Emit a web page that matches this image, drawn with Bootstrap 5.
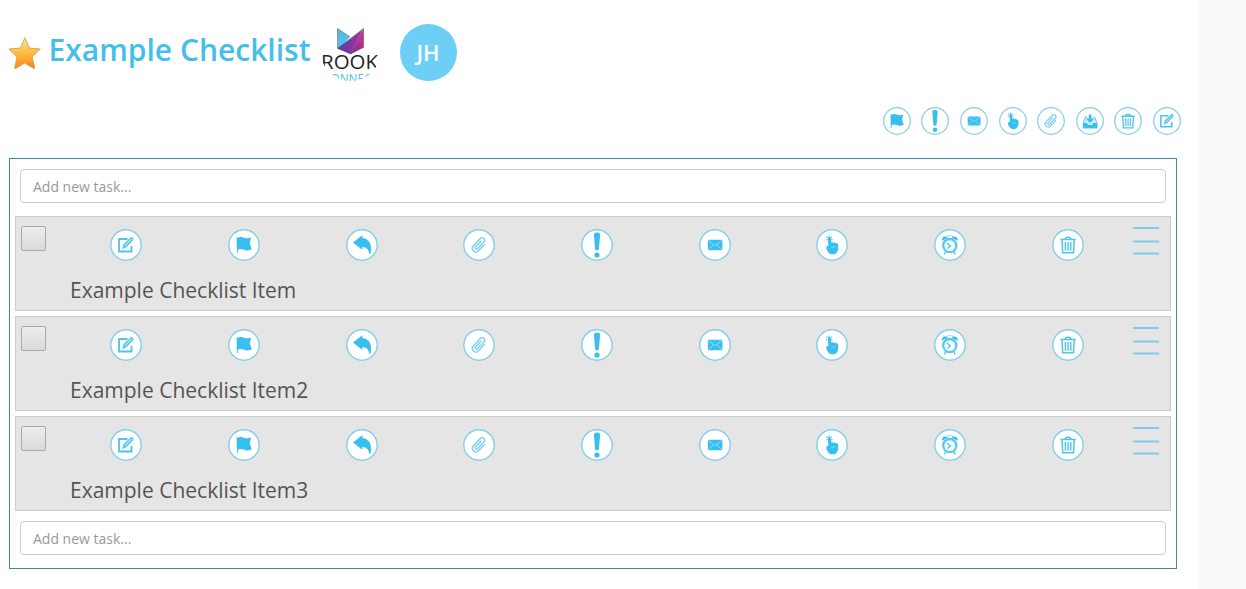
<!DOCTYPE html>
<html lang="en">
<head>
<meta charset="utf-8">
<meta name="viewport" content="width=device-width, initial-scale=1">
<title>Example Checklist</title>
<link href="https://cdn.jsdelivr.net/npm/bootstrap@5.3.0/dist/css/bootstrap.min.css" rel="stylesheet">
<style>
  body { font-family: "Open Sans", "Noto Sans", sans-serif; background: #fafafa; height: 589px; overflow: hidden; color: #555; }
  .page { width: 1199px; height: 589px; background: #fff; padding: 24px 22px 0 9px; }
  .page-head { height: 57px; }
  .star { width: 32px; height: 34px; margin-top: 0; }
  .page-title { font-size: 30px; font-weight: 600; color: #45bfea; line-height: 40px; margin: -5px 0 0 7.5px; white-space: nowrap; width: 272.5px; }
  .brand-logo { width: 59px; height: 57px; border-radius: 50%; overflow: hidden; }
  .avatar { width: 57px; height: 57px; background: #6dcff6; color: #fff; font-size: 22px; font-weight: 600; margin-left: 20px; padding-right: 1px; }
  .tools { margin: 26px -4px 0 0; gap: 10.6px; height: 28px; }
  .tools svg { width: 28px; height: 28px; display: block; }
  .panel { width: 1168px; height: 411px; border: 1px solid #3a8ba8; margin-top: 23px; padding: 10px 5px 0; }
  .task-input { height: 34px; font-size: 14px; padding: 6px 12px 6px; border: 1px solid #ccc; border-radius: 4px; margin: 0 5px; width: 1146px; line-height: 21px; }
  .task-input::placeholder { color: #999; opacity: 1; }
  .items { margin: 13px 0 10px; gap: 5px; }
  .item { height: 95px; background: #e5e5e5; border: 1px solid #ccc; padding: 9px 11px 0 5px; }
  .tick { appearance: none; width: 25px; height: 25px; margin: 0; border: 1px solid #aaa; border-radius: 2px; background: linear-gradient(#ededed, #dadada); flex: none; }
  .actions { width: 1059.3px; margin: 3px 0 0 21.4px; flex: none; }
  .actions svg { width: 32px; height: 32px; display: block; margin: auto; }
  .grip { width: 26px; height: 28px; margin-left: 6.3px; margin-top: 1px; flex: none; }
  .item-name { font-size: 21px; line-height: 28px; margin: 15px 0 0 49px; white-space: nowrap; }
  .item > .d-flex { height: 35px; }
</style>
</head>
<body>
<svg width="0" height="0" class="position-absolute" aria-hidden="true">
  <defs>
    <symbol id="ring" viewBox="0 0 32 32"><circle cx="16" cy="16" r="15.2" fill="#fff" stroke="#84cfe8" stroke-width="1.4"/></symbol>
    <symbol id="edit" viewBox="0 0 32 32"><use href="#ring"/>
      <path d="M17.500 10H9v12.500h12.500V17" fill="none" stroke="#4cc4ec" stroke-width="1.800"/>
      <path d="M13.200 19l.8-3.200 6.800-6.900c1-.9 2.800.8 1.900 1.900l-6.800 6.900z" fill="#a5e2f6" stroke="#4cc4ec" stroke-width="1.300"/></symbol>
    <symbol id="flag" viewBox="0 0 32 32"><use href="#ring"/>
      <path d="M8.600 8.500l1-.4v1c2.200-1.800 4.400-1 6.800-.2 2.200.8 4.200.5 6.700-.3l-1.400 5.700 2 5.800c-2.200 1.700-4.600 1.700-6.900.8-2.300-.9-4.600-1.200-7-.2v3.300H8.900z" fill="#37bff0"/></symbol>
    <symbol id="bang" viewBox="0 0 32 32"><use href="#ring"/>
      <path d="M12.900 5.800c0-3 6.200-3 6.200 0l-1.200 14.300c-.2 1.700-3.600 1.700-3.800 0z" fill="#37bff0"/><circle cx="16" cy="26" r="2.600" fill="#37bff0"/></symbol>
    <symbol id="mail" viewBox="0 0 32 32"><use href="#ring"/>
      <rect x="8.800" y="10.800" width="14.600" height="10.400" rx="1.200" fill="#37bff0"/>
      <path d="M9.500 11.700l6.600 5 6.600-5M9.500 20.500l4.800-4.700M22.700 20.500l-4.800-4.700" fill="none" stroke="#a9e3f7" stroke-width=".8"/></symbol>
    <symbol id="hand" viewBox="0 0 32 32"><use href="#ring"/>
      <path d="M11.900 9.200c.1-1.600 2.700-1.600 2.900 0l.6 4.600c.8-.8 2-.7 2.400.1.800-.6 1.900-.3 2.200.5 1.100-.4 2.200.4 2.200 1.500.5 5.300-1 9.100-5 9.400-4 .2-5.500-2.400-6.700-5.400-.7-1.800.2-3.300 1.900-2.800z" fill="#37bff0"/>
      <path d="M10 10.800l1.600-.4M10.300 7.800l1.400.8M13.200 6.400v1.600M16.200 7.800l-1.400.8M16.500 10.800l-1.500-.4M15.200 18.500l4-.7" stroke="#6fd1f2" stroke-width="1.300" fill="none"/></symbol>
    <symbol id="clip" viewBox="0 0 32 32"><use href="#ring"/>
      <path transform="rotate(43 16 16)" d="M19.500 12v8.700c0 4.500-7 4.500-7 0V10.300c0-3.300 5-3.300 5 0v9.300c0 2-2.700 2-2.700 0V12" fill="none" stroke="#6fcff0" stroke-width="1.300" stroke-linecap="round"/></symbol>
    <symbol id="inbox" viewBox="0 0 32 32"><use href="#ring"/>
      <path d="M12.300 11.500h-1.500L8.300 18v5.800h15.600V18l-2.500-6.500h-1.500" fill="#c9edf9" stroke="#4cc4ec" stroke-width="1"/>
      <path d="M8 18.200h4.300l1.500 2.300h4.600l1.500-2.300h4.300v6H8zM14.600 8.500h3v5h3L16.100 18.300l-4.500-4.800h3z" fill="#37bff0"/></symbol>
    <symbol id="bin" viewBox="0 0 32 32"><use href="#ring"/>
      <path d="M8.400 10.600h15.400M13.200 10.200c.2-2.500 5.600-2.500 5.800 0M10 11l.7 12.800h10.800l.7-12.800" fill="none" stroke="#4cc4ec" stroke-width="1.500"/>
      <path d="M13.300 13l.2 8.800M16.100 13v8.800M18.900 13l-.2 8.800" stroke="#4cc4ec" stroke-width="1.400"/></symbol>
    <symbol id="reply" viewBox="0 0 32 32"><use href="#ring"/>
      <path d="M7 13.600l8.600-6.900c.4-.3.800-.1.800.4v1.800c7 .4 10.100 7.400 8.100 15.600-.2.600-.9.500-1.400 0-.3-4.300-2.600-6.200-6.700-6.600v2c0 .6-.5.700-.9.300z" fill="#37bff0"/></symbol>
    <symbol id="clock" viewBox="0 0 32 32"><use href="#ring"/>
      <path d="M12.500 8.200c.3-2.200 6.300-2.200 6.600 0" fill="none" stroke="#9ddff5" stroke-width="1.100"/>
      <path d="M7.900 11.800c-.8-3.600 3.600-5.600 6-3.100zM23.700 11.800c.8-3.600-3.600-5.600-6-3.100z" fill="#37bff0"/>
      <circle cx="15.800" cy="16.600" r="6.600" fill="#fff" stroke="#5ac9ee" stroke-width="2.300"/>
      <path d="M12.800 14l3.600 2.800-2.800 2.600M11.600 22.500l-1.200 2.900M20 22.500l1.200 2.900" fill="none" stroke="#4cc4ec" stroke-width="1.300"/>
      <circle cx="15.800" cy="16.600" r="4.700" fill="none" stroke="#8bd9f3" stroke-width=".9" stroke-dasharray=".8 1.660"/></symbol>
    <linearGradient id="gold" x2="0" y2="1"><stop stop-color="#fbe98a"/><stop offset=".5" stop-color="#fdbb3c"/><stop offset="1" stop-color="#f5861c"/></linearGradient>
    <linearGradient id="violet" x2="1" y2="0"><stop stop-color="#5a3fa5"/><stop offset="1" stop-color="#a3309a"/></linearGradient>
    <linearGradient id="pink" x2="0" y2="1"><stop stop-color="#ef2f86"/><stop offset="1" stop-color="#8d2d91"/></linearGradient>
    <symbol id="bars" viewBox="0 0 26 28"><path d="M0 1h26M0 14.500h26M0 26.500h26" stroke="#7fccea" stroke-width="2"/></symbol>
  </defs>
</svg>

<main class="page">
  <header class="page-head d-flex align-items-center">
    <svg class="star flex-shrink-0" viewBox="0 0 32 34"><path d="M15.800 1.800l4.600 10.300 11 .9-8.200 7.800 2.500 10.900c.1.800-.5 1-1.100.7l-9-5.300-8.800 5.300c-.7.300-1.200-.1-1.100-.8l2.300-10.800L.3 13.600c-.3-.4-.1-.7.400-.8l10.500-.7z" fill="url(#gold)" stroke="#c99b55" stroke-width=".8" stroke-linejoin="round"/></svg>
    <h1 class="page-title">Example Checklist</h1>
    <svg class="brand-logo flex-shrink-0" viewBox="0 0 59 57">
      <path d="M16.500 4.500L29 13l-12 13z" fill="#52bfe8"/>
      <path d="M16.500 24.500L41.500 5.500 29.500 30z" fill="url(#violet)"/>
      <path d="M42.500 4.500v18.700L29.500 30z" fill="url(#pink)"/>
      <path d="M16.500 4.500L29 13M16.500 4.500v19.500L29.500 30l13-6.500v-19L29.500 30M16.500 24.500l26-20" fill="none" stroke="#4b3a6d" stroke-width=".5"/>
      <text x="0" y="45" font-size="19.600" fill="#252525" textLength="57" lengthAdjust="spacingAndGlyphs">ROOK</text>
      <text x="2" y="58.500" font-size="12.500" fill="#52bfe5" textLength="55" lengthAdjust="spacingAndGlyphs">CONNECT</text>
    </svg>
    <div class="avatar rounded-circle d-flex align-items-center justify-content-center flex-shrink-0">JH</div>
  </header>

  <nav class="tools d-flex justify-content-end" aria-label="Checklist actions">
    <svg><use href="#flag"/></svg><svg><use href="#bang"/></svg><svg><use href="#mail"/></svg><svg><use href="#hand"/></svg><svg><use href="#clip"/></svg><svg><use href="#inbox"/></svg><svg><use href="#bin"/></svg><svg><use href="#edit"/></svg>
  </nav>

  <section class="panel">
    <input class="form-control task-input" type="text" placeholder="Add new task...">
    <div class="items d-flex flex-column">
      <article class="item">
        <div class="d-flex align-items-start">
          <input class="tick" type="checkbox" aria-label="Done">
          <div class="actions row g-0">
            <div class="col"><svg><use href="#edit"/></svg></div><div class="col"><svg><use href="#flag"/></svg></div><div class="col"><svg><use href="#reply"/></svg></div><div class="col"><svg><use href="#clip"/></svg></div><div class="col"><svg><use href="#bang"/></svg></div><div class="col"><svg><use href="#mail"/></svg></div><div class="col"><svg><use href="#hand"/></svg></div><div class="col"><svg><use href="#clock"/></svg></div><div class="col"><svg><use href="#bin"/></svg></div>
          </div>
          <svg class="grip"><use href="#bars"/></svg>
        </div>
        <div class="item-name">Example Checklist Item</div>
      </article>
      <article class="item">
        <div class="d-flex align-items-start">
          <input class="tick" type="checkbox" aria-label="Done">
          <div class="actions row g-0">
            <div class="col"><svg><use href="#edit"/></svg></div><div class="col"><svg><use href="#flag"/></svg></div><div class="col"><svg><use href="#reply"/></svg></div><div class="col"><svg><use href="#clip"/></svg></div><div class="col"><svg><use href="#bang"/></svg></div><div class="col"><svg><use href="#mail"/></svg></div><div class="col"><svg><use href="#hand"/></svg></div><div class="col"><svg><use href="#clock"/></svg></div><div class="col"><svg><use href="#bin"/></svg></div>
          </div>
          <svg class="grip"><use href="#bars"/></svg>
        </div>
        <div class="item-name">Example Checklist Item2</div>
      </article>
      <article class="item">
        <div class="d-flex align-items-start">
          <input class="tick" type="checkbox" aria-label="Done">
          <div class="actions row g-0">
            <div class="col"><svg><use href="#edit"/></svg></div><div class="col"><svg><use href="#flag"/></svg></div><div class="col"><svg><use href="#reply"/></svg></div><div class="col"><svg><use href="#clip"/></svg></div><div class="col"><svg><use href="#bang"/></svg></div><div class="col"><svg><use href="#mail"/></svg></div><div class="col"><svg><use href="#hand"/></svg></div><div class="col"><svg><use href="#clock"/></svg></div><div class="col"><svg><use href="#bin"/></svg></div>
          </div>
          <svg class="grip"><use href="#bars"/></svg>
        </div>
        <div class="item-name">Example Checklist Item3</div>
      </article>
    </div>
    <input class="form-control task-input" type="text" placeholder="Add new task...">
  </section>
</main>
<script src="https://cdn.jsdelivr.net/npm/bootstrap@5.3.0/dist/js/bootstrap.bundle.min.js"></script>
</body>
</html>
